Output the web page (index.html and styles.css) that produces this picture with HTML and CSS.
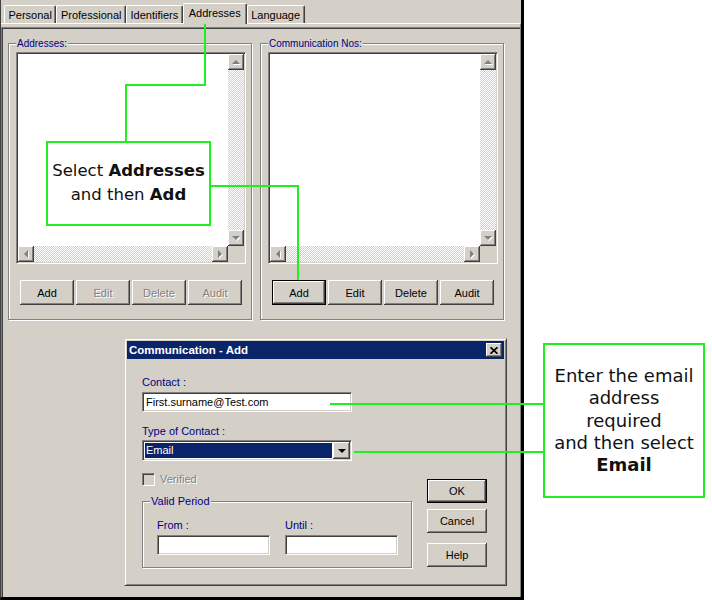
FILE: index.html
```html
<!DOCTYPE html>
<html lang="en">
<head>
  <meta charset="UTF-8">
  <meta name="viewport" content="width=device-width, initial-scale=1.0">
  <title>Addresses • Communication - Add</title>
  <link rel="stylesheet" href="styles.css">
</head>
<body>
  <div class="stage">
    <div class="window">
      <!-- tab strip -->
      <div class="tabs">
        <div class="tab">Personal</div>
        <div class="tab">Professional</div>
        <div class="tab">Identifiers</div>
        <div class="tab tab-active">Addresses</div>
        <div class="tab">Language</div>
      </div>

      <div class="pane">
        <div class="panel">
          <!-- Addresses -->
          <div class="group">
            <div class="group-title">Addresses:</div>
            <div class="listbox">
              <div class="list-area"></div>
              <div class="vscroll">
                <div class="sb-btn"><span class="arrow arrow-up"></span></div>
                <div class="sb-track"></div>
                <div class="sb-btn"><span class="arrow arrow-down"></span></div>
              </div>
              <div class="hscroll">
                <div class="sb-btn"><span class="arrow arrow-left"></span></div>
                <div class="sb-track"></div>
                <div class="sb-btn"><span class="arrow arrow-right"></span></div>
              </div>
              <div class="sb-corner"></div>
            </div>
            <div class="btn-row">
              <button class="btn">Add</button>
              <button class="btn" disabled>Edit</button>
              <button class="btn" disabled>Delete</button>
              <button class="btn" disabled>Audit</button>
            </div>
          </div>

          <!-- Communication Nos -->
          <div class="group">
            <div class="group-title">Communication Nos:</div>
            <div class="listbox">
              <div class="list-area"></div>
              <div class="vscroll">
                <div class="sb-btn"><span class="arrow arrow-up"></span></div>
                <div class="sb-track"></div>
                <div class="sb-btn"><span class="arrow arrow-down"></span></div>
              </div>
              <div class="hscroll">
                <div class="sb-btn"><span class="arrow arrow-left"></span></div>
                <div class="sb-track"></div>
                <div class="sb-btn"><span class="arrow arrow-right"></span></div>
              </div>
              <div class="sb-corner"></div>
            </div>
            <div class="btn-row">
              <button class="btn btn-default">Add</button>
              <button class="btn">Edit</button>
              <button class="btn">Delete</button>
              <button class="btn">Audit</button>
            </div>
          </div>
        </div>
      </div>
    </div>

    <!-- Communication - Add dialog -->
    <div class="dialog">
      <div class="titlebar">
        <span>Communication - Add</span>
        <span class="close-btn">
          <svg width="8" height="7" viewBox="0 0 8 7"><path d="M0.5 0.3 L7.5 6.7 M7.5 0.3 L0.5 6.7" stroke="#000" stroke-width="1.7"/></svg>
        </span>
      </div>
      <div class="dialog-body">
        <div class="field-label label-contact">Contact :</div>
        <div class="textbox textbox-contact">First.surname@Test.com</div>
        <div class="field-label label-type">Type of Contact :</div>
        <div class="combo">
          <div class="combo-value">Email</div>
          <div class="combo-btn"><span class="arrow arrow-down arrow-black"></span></div>
        </div>

        <div class="dialog-row">
          <div class="dialog-left">
            <div class="check-row">
              <span class="checkbox"></span>
              <span class="disabled-text">Verified</span>
            </div>
            <div class="group period">
              <div class="group-title">Valid Period</div>
              <div class="period-fields">
                <div class="period-field">
                  <div class="field-label">From :</div>
                  <div class="textbox textbox-date"></div>
                </div>
                <div class="period-field">
                  <div class="field-label">Until :</div>
                  <div class="textbox textbox-date"></div>
                </div>
              </div>
            </div>
          </div>
          <div class="dialog-buttons">
            <button class="btn btn-dlg btn-default">OK</button>
            <button class="btn btn-dlg btn-cancel">Cancel</button>
            <button class="btn btn-dlg btn-help">Help</button>
          </div>
        </div>
      </div>
    </div>

    <!-- annotation wires -->
    <div class="wire wire-tab-down"></div>
    <div class="wire wire-tab-across"></div>
    <div class="wire wire-tab-note"></div>
    <div class="wire wire-add-across"></div>
    <div class="wire wire-add-down"></div>
    <div class="wire wire-contact"></div>
    <div class="wire wire-type"></div>

    <!-- annotation notes -->
    <div class="callout callout-nav">Select <b>Addresses</b><br>and then <b>Add</b></div>
    <div class="callout callout-email">Enter the email<br>address<br>required<br>and then select<br><b>Email</b></div>
  </div>
</body>
</html>
```

FILE: styles.css
```css
* {
  box-sizing: border-box;
}
body {
  margin: 0;
  background: #fff;
  font-family: "Liberation Sans", Arial, sans-serif;
  font-size: 11px;
  color: #000;
}
.stage {
  position: relative;
  width: 712px;
  height: 600px;
  overflow: hidden;
  background: #fff;
}

/* main window */
.window {
  width: 524px;
  height: 600px;
  background: #d4d0c8;
  border-left: 1px solid #404040;
  border-right: 3px solid #000;
  border-bottom: 3px solid #000;
  display: flex;
  flex-direction: column;
}
.tabs {
  display: flex;
  align-items: flex-end;
  height: 23px;
  padding-left: 3px;
}
.tab {
  height: 18px;
  padding: 3px 3.5px 0 3.5px;
  line-height: 13px;
  white-space: nowrap;
  border: 1px solid #fff;
  border-bottom: 0;
  border-right-color: #404040;
  border-radius: 2px 2px 0 0;
  box-shadow: inset -1px 0 #808080;
}
.tab-active {
  height: 21px;
  margin-bottom: -1px;
  padding: 3px 5px 0 5px;
  position: relative;
  z-index: 1;
  background: #d4d0c8;
}
.pane {
  flex: 1;
  border-top: 1px solid #fff;
  border-right: 1px solid #808080;
  padding-top: 3px;
  display: flex;
  flex-direction: column;
}
.panel {
  flex: 1;
  border-top: 1px solid #808080;
  border-left: 1px solid #808080;
  box-shadow: inset 1px 1px #404040;
  padding: 15px 0 0 6px;
  display: flex;
  align-items: flex-start;
  gap: 8px;
}

/* etched group box */
.group {
  width: 244px;
  border: 1px solid #808080;
  box-shadow: inset 1px 1px #fff, 1px 1px #fff;
  padding: 0 7px 14px 7px;
}
.group-title {
  width: fit-content;
  margin-top: -7px;
  padding: 0 1px;
  background: #d4d0c8;
  font-size: 10px;
  line-height: 13px;
  color: #000080;
}

/* listbox with scrollbars */
.listbox {
  width: 230px;
  height: 212px;
  margin-top: 2px;
  padding: 1px;
  border: 1px solid;
  border-color: #808080 #fff #fff #808080;
  box-shadow: inset 1px 1px #404040, inset -1px -1px #d4d0c8;
  background: #fff;
  display: grid;
  grid-template-columns: 1fr 16px;
  grid-template-rows: 1fr 16px;
}
.list-area {
  background: #fff;
}
.vscroll {
  display: flex;
  flex-direction: column;
}
.hscroll {
  display: flex;
}
.sb-track {
  flex: 1;
  background-color: #fff;
  background-image: repeating-conic-gradient(#d4d0c8 0 25%, #fff 0 50%);
  background-size: 2px 2px;
}
.sb-btn {
  width: 16px;
  height: 16px;
  flex: none;
  background: #d4d0c8;
  box-shadow: inset -1px -1px #404040, inset 1px 1px #fff, inset -2px -2px #808080;
  display: flex;
  align-items: center;
  justify-content: center;
}
.sb-corner {
  background: #d4d0c8;
}
.arrow {
  width: 0;
  height: 0;
  filter: drop-shadow(1px 1px 0 #fff);
}
.arrow-up {
  border-left: 4px solid transparent;
  border-right: 4px solid transparent;
  border-bottom: 4px solid #808080;
}
.arrow-down {
  border-left: 4px solid transparent;
  border-right: 4px solid transparent;
  border-top: 4px solid #808080;
}
.arrow-left {
  border-top: 4px solid transparent;
  border-bottom: 4px solid transparent;
  border-right: 4px solid #808080;
}
.arrow-right {
  border-top: 4px solid transparent;
  border-bottom: 4px solid transparent;
  border-left: 4px solid #808080;
}
.arrow-black {
  border-top-color: #000;
  filter: none;
}

/* buttons */
.btn-row {
  display: flex;
  gap: 2px;
  margin: 16px 0 0 4px;
}
.btn {
  width: 54px;
  height: 25px;
  padding: 0;
  border: 0;
  background: #d4d0c8;
  box-shadow: inset -1px -1px #404040, inset 1px 1px #fff, inset -2px -2px #808080;
  font-family: inherit;
  font-size: 11px;
  color: #000;
}
.btn:disabled {
  color: #808080;
  text-shadow: 1px 1px 0 #fff;
}
.btn-default {
  border: 1px solid #000;
}

/* dialog */
.dialog {
  position: absolute;
  left: 124px;
  top: 338px;
  width: 383px;
  height: 248px;
  background: #d4d0c8;
  border: 1px solid;
  border-color: #d4d0c8 #404040 #404040 #d4d0c8;
  box-shadow: inset 1px 1px #fff, inset -1px -1px #808080;
  padding: 2px;
}
.titlebar {
  height: 18px;
  padding: 0 2px;
  background: #0a246a;
  color: #fff;
  font-size: 11.5px;
  font-weight: bold;
  display: flex;
  align-items: center;
  justify-content: space-between;
}
.close-btn {
  width: 16px;
  height: 14px;
  background: #d4d0c8;
  box-shadow: inset -1px -1px #404040, inset 1px 1px #fff, inset -2px -2px #808080;
  display: flex;
  align-items: center;
  justify-content: center;
}
.dialog-body {
  padding-left: 15px;
}
.field-label {
  line-height: 13px;
  color: #000080;
}
.label-contact {
  margin-top: 17px;
}
.label-type {
  margin-top: 13px;
}
.textbox {
  height: 20px;
  border: 1px solid;
  border-color: #808080 #fff #fff #808080;
  box-shadow: inset 1px 1px #404040, inset -1px -1px #d4d0c8;
  background: #fff;
  padding-left: 3px;
  line-height: 18px;
}
.textbox-contact {
  width: 210px;
  margin-top: 3px;
}
.combo {
  width: 210px;
  height: 21px;
  margin-top: 2px;
  padding: 1px;
  border: 1px solid;
  border-color: #808080 #fff #fff #808080;
  box-shadow: inset 1px 1px #404040, inset -1px -1px #d4d0c8;
  background: #fff;
  display: flex;
}
.combo-value {
  flex: 1;
  margin: 1px;
  padding-left: 1px;
  background: #0a246a;
  color: #fff;
  line-height: 15px;
}
.combo-btn {
  width: 17px;
  background: #d4d0c8;
  box-shadow: inset -1px -1px #404040, inset 1px 1px #fff, inset -2px -2px #808080;
  display: flex;
  align-items: center;
  justify-content: center;
}
.dialog-row {
  display: flex;
  margin-top: 12px;
}
.dialog-left {
  width: 270px;
}
.check-row {
  display: flex;
  align-items: center;
  gap: 5px;
  height: 13px;
  line-height: 13px;
}
.checkbox {
  width: 13px;
  height: 13px;
  border: 1px solid;
  border-color: #808080 #fff #fff #808080;
  box-shadow: inset 1px 1px #404040, inset -1px -1px #d4d0c8;
  background: #d4d0c8;
}
.disabled-text {
  color: #808080;
  text-shadow: 1px 1px 0 #fff;
}
.period {
  width: 270px;
  margin-top: 15px;
  padding: 0 0 12px 0;
}
.period .group-title {
  margin-left: 7px;
  font-size: 11px;
}
.period-fields {
  display: flex;
  gap: 15px;
  margin-top: 11px;
  padding-left: 14px;
}
.textbox-date {
  width: 113px;
  margin-top: 3px;
}
.dialog-buttons {
  display: flex;
  flex-direction: column;
  margin: 6px 0 0 15px;
}
.btn-dlg {
  width: 60px;
  height: 24px;
}
.btn-cancel {
  margin-top: 6px;
}
.btn-help {
  margin-top: 10px;
}

/* annotations */
.wire {
  position: absolute;
  background: #20f020;
}
.wire-tab-down { left: 204px; top: 24px; width: 2px; height: 62px; }
.wire-tab-across { left: 125px; top: 84px; width: 81px; height: 2px; }
.wire-tab-note { left: 125px; top: 84px; width: 2px; height: 57px; }
.wire-add-across { left: 211px; top: 185px; width: 88px; height: 2px; }
.wire-add-down { left: 297px; top: 185px; width: 2px; height: 95px; }
.wire-contact { left: 330px; top: 403px; width: 213px; height: 2px; }
.wire-type { left: 354px; top: 451px; width: 189px; height: 2px; }

.callout {
  position: absolute;
  background: #fff;
  border: 2px solid #20f020;
  font-family: "DejaVu Sans", sans-serif;
  color: #111;
  text-align: center;
  white-space: nowrap;
}
.callout b {
  font-weight: 700;
}
.callout-nav {
  left: 46px;
  top: 141px;
  width: 165px;
  height: 85px;
  padding-top: 16px;
  font-size: 16.5px;
  line-height: 24px;
}
.callout-email {
  left: 543px;
  top: 343px;
  width: 162px;
  height: 155px;
  padding-top: 20px;
  font-size: 18px;
  line-height: 22.3px;
}
```
